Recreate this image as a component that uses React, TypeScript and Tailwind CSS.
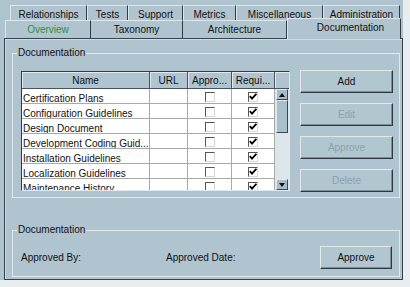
const topTabs = [
  { label: "Relationships", w: "w-[77px]" },
  { label: "Tests", w: "w-[41px]" },
  { label: "Support", w: "w-[55px]" },
  { label: "Metrics", w: "w-[53px]" },
  { label: "Miscellaneous", w: "w-[87px]" },
  { label: "Administration", w: "w-[77px]" },
];

const docs = [
  "Certification Plans",
  "Configuration Guidelines",
  "Design Document",
  "Development Coding Guid...",
  "Installation Guidelines",
  "Localization Guidelines",
  "Maintenance History",
];

function Check({ on }: { on: boolean }) {
  return (
    <span className="flex h-[10px] w-[10px] items-center justify-center border border-t-[#555] border-l-[#555] border-b-[#d8d8d8] border-r-[#d8d8d8] bg-white">
      {on && (
        <svg width="8" height="7" viewBox="0 0 8 7">
          <path d="M0.8 3.2 L3 5.6 L7.4 0.8" stroke="#000" strokeWidth="1.9" fill="none" />
        </svg>
      )}
    </span>
  );
}

function Btn({ label, disabled, w }: { label: string; disabled?: boolean; w: string }) {
  return (
    <div
      className={`flex h-[23px] ${w} items-center justify-center border border-t-[#e1e9ed] border-l-[#e1e9ed] border-b-[#2c3942] border-r-[#2c3942] bg-[#b2c6d0] shadow-[inset_-1px_-1px_0_#7b8e99] ${
        disabled ? "text-[#8aa1ae]" : "text-[#111]"
      }`}
    >
      {label}
    </div>
  );
}

function ScrollArrow({ up }: { up: boolean }) {
  return (
    <div className="mx-[1px] flex h-[11px] shrink-0 items-center justify-center border border-t-[#dfe8ec] border-l-[#dfe8ec] border-b-[#3a4852] border-r-[#3a4852] bg-[#a6bdc9]">
      <svg width="6" height="4" viewBox="0 0 6 4">
        <path d={up ? "M0 4 L3 0 L6 4 Z" : "M0 0 L3 4 L6 0 Z"} fill="#111" />
      </svg>
    </div>
  );
}

export default function App() {
  return (
    <div className="h-[287px] w-[410px] overflow-hidden bg-[#e7ecef] font-['Liberation_Sans',Arial,sans-serif] text-[10px] text-[#111]">
      <div className="h-[280px] w-[403px] bg-[#afc4cf]">
        {/* tab rows */}
        <div className="flex h-[20px] pl-[10px] pt-[5px]">
          {topTabs.map((t) => (
            <div
              key={t.label}
              className={`${t.w} h-[15px] border-t border-l border-r border-t-[#dce6eb] border-l-[#dce6eb] border-r-[#2f3c45] text-center leading-[17px]`}
            >
              {t.label}
            </div>
          ))}
        </div>
        <div className="relative z-10 flex h-[18px] items-end pl-[5px]">
          <div className="h-[18px] w-[86px] border-t border-l border-r border-t-[#dce6eb] border-l-[#dce6eb] border-r-[#2f3c45] text-center leading-[17px] text-[#2f9140]">
            Overview
          </div>
          <div className="h-[18px] w-[92px] border-t border-r border-t-[#dce6eb] border-r-[#2f3c45] text-center leading-[17px]">
            Taxonomy
          </div>
          <div className="h-[18px] w-[104px] border-t border-r border-t-[#dce6eb] border-r-[#2f3c45] text-center leading-[17px]">
            Architecture
          </div>
          <div className="mb-[-1px] h-[21px] w-[114px] border-t border-l border-r border-t-[#dce6eb] border-l-[#dce6eb] border-r-[#2f3c45] bg-[#afc4cf] pl-[13px] text-center leading-[17px]">
            Documentation
          </div>
        </div>

        {/* panel */}
        <div className="ml-[4px] h-[242px] w-[399px] border border-[#34424c] pl-[7px] pr-[2px] pt-[8px] shadow-[inset_1px_1px_0_#d0dce2]">
          <fieldset className="border border-[#e0e8ec]">
            <legend className="ml-[4px] px-[1px] leading-[12px]">Documentation</legend>
            <div className="flex items-start pb-[5px] pt-[11px]">
              <div className="ml-[8px] mt-[1px] flex h-[120px] w-[269px] overflow-hidden border border-t-[#2f3d47] border-l-[#2f3d47] border-b-[#dfe8ec] border-r-[#dfe8ec] bg-white">
                <div className="flex w-[253px] flex-col">
                  <div className="flex h-[17px] shrink-0 bg-[#afc4cf] text-center leading-[17px]">
                    <div className="w-[128px] border-r border-b border-[#44535e] shadow-[inset_1px_1px_0_#e2eaee]">Name</div>
                    <div className="w-[38px] border-r border-b border-[#44535e] shadow-[inset_1px_1px_0_#e2eaee]">URL</div>
                    <div className="w-[44px] border-r border-b border-[#44535e] shadow-[inset_1px_1px_0_#e2eaee]">Appro...</div>
                    <div className="w-[43px] border-r border-b border-[#44535e] shadow-[inset_1px_1px_0_#e2eaee]">Requi...</div>
                  </div>
                  {docs.map((d) => (
                    <div key={d} className="flex h-[15px] shrink-0">
                      <div className="w-[128px] overflow-hidden whitespace-nowrap border-r border-b border-[#a9a9a9] pl-[1px] leading-[19px]">
                        {d}
                      </div>
                      <div className="w-[38px] border-r border-b border-[#a9a9a9]" />
                      <div className="flex w-[44px] items-center justify-center border-r border-b border-[#a9a9a9] pt-[1px]">
                        <Check on={false} />
                      </div>
                      <div className="flex w-[43px] items-center justify-center border-r border-b border-[#a9a9a9] pt-[1px]">
                        <Check on={true} />
                      </div>
                    </div>
                  ))}
                </div>
                <div className="flex w-[14px] flex-col bg-[#dde6ea]">
                  <div className="h-[17px] shrink-0 border-b border-[#44535e] bg-[#afc4cf] shadow-[inset_1px_1px_0_#e2eaee]" />
                  <ScrollArrow up={true} />
                  <div className="mx-[1px] h-[33px] shrink-0 border border-t-[#dfe8ec] border-l-[#dfe8ec] border-b-[#3a4852] border-r-[#3a4852] bg-[#a9bfcb]" />
                  <div className="flex-1" />
                  <ScrollArrow up={false} />
                </div>
              </div>
              <div className="ml-auto mr-[6px] flex flex-col gap-[10px]">
                <Btn label="Add" w="w-[93px]" />
                <Btn label="Edit" w="w-[93px]" disabled />
                <Btn label="Approve" w="w-[93px]" disabled />
                <Btn label="Delete" w="w-[93px]" disabled />
              </div>
            </div>
          </fieldset>

          <fieldset className="mt-[26px] border border-[#e0e8ec]">
            <legend className="ml-[4px] px-[1px] leading-[12px]">Documentation</legend>
            <div className="flex items-center pb-[7px] pl-[8px] pt-[10px]">
              <span className="w-[145px]">Approved By:</span>
              <span>Approved Date:</span>
              <div className="ml-auto mr-[7px]">
                <Btn label="Approve" w="w-[72px]" />
              </div>
            </div>
          </fieldset>
        </div>
      </div>
    </div>
  );
}
